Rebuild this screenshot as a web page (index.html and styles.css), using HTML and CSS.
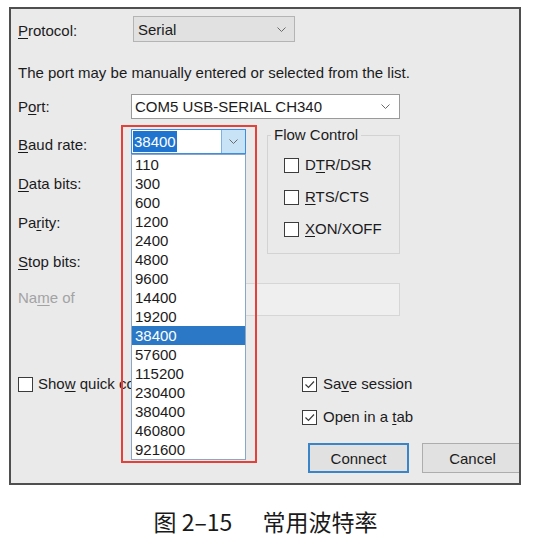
FILE: index.html
```
<!DOCTYPE html>
<html lang="en">
<head>
<meta charset="utf-8">
<title>Serial settings</title>
<link rel="stylesheet" href="styles.css">
</head>
<body>
<div class="dialog">
  <div class="row row-protocol">
    <span class="lbl"><u>P</u>rotocol:</span>
    <div class="combo combo-serial"><span>Serial</span><svg class="chev" width="9" height="5" viewBox="0 0 9 5"><polyline points="0.5,0.5 4.5,4.5 8.5,0.5"/></svg></div>
  </div>
  <p class="hint">The port may be manually entered or selected from the list.</p>
  <div class="row row-port">
    <span class="lbl">P<u>o</u>rt:</span>
    <div class="combo combo-port"><span>COM5 USB-SERIAL CH340</span><svg class="chev" width="9" height="5" viewBox="0 0 9 5"><polyline points="0.5,0.5 4.5,4.5 8.5,0.5"/></svg></div>
  </div>
  <div class="settings">
    <span class="lbl r1"><u>B</u>aud rate:</span>
    <div class="baud">
      <div class="baud-combo">
        <span class="baud-value"><span class="sel">38400</span></span>
        <span class="baud-btn"><svg class="chev" width="9" height="5" viewBox="0 0 9 5"><polyline points="0.5,0.5 4.5,4.5 8.5,0.5"/></svg></span>
      </div>
      <ul class="baud-list">
        <li>110</li><li>300</li><li>600</li><li>1200</li><li>2400</li><li>4800</li><li>9600</li><li>14400</li><li>19200</li><li class="active">38400</li><li>57600</li><li>115200</li><li>230400</li><li>380400</li><li>460800</li><li>921600</li>
      </ul>
      <div class="mark"></div>
    </div>
    <fieldset class="flow">
      <legend>Flow Control</legend>
      <div class="check"><span class="box"></span><span>D<u>T</u>R/DSR</span></div>
      <div class="check"><span class="box"></span><span><u>R</u>TS/CTS</span></div>
      <div class="check"><span class="box"></span><span><u>X</u>ON/XOFF</span></div>
    </fieldset>
    <span class="lbl r2"><u>D</u>ata bits:</span>
    <span class="lbl r3">Pa<u>r</u>ity:</span>
    <span class="lbl r4"><u>S</u>top bits:</span>
  </div>
  <div class="row row-name">
    <span class="lbl muted">Na<u>m</u>e of</span>
    <div class="name-box"></div>
  </div>
  <div class="row row-opts">
    <div class="check show"><span class="box"></span><span>Sho<u>w</u> quick connect on startup</span></div>
    <div class="check"><span class="box"><svg width="13" height="13" viewBox="0 0 13 13"><polyline points="2.5,6.5 5.5,9.5 11,3.5"/></svg></span><span>Sa<u>v</u>e session</span></div>
  </div>
  <div class="row row-tab">
    <div class="check"><span class="box"><svg width="13" height="13" viewBox="0 0 13 13"><polyline points="2.5,6.5 5.5,9.5 11,3.5"/></svg></span><span>Open in a <u>t</u>ab</span></div>
  </div>
  <div class="row row-buttons">
    <button class="btn primary" type="button">Connect</button>
    <button class="btn" type="button">Cancel</button>
  </div>
</div>
<p class="caption"><span>图 2–15</span><span class="cap-title">常用波特率</span></p>
</body>
</html>
```
FILE: styles.css
```
html, body {
  margin: 0;
  padding: 0;
  background: #ffffff;
}

body {
  font-family: "Liberation Sans", Arial, sans-serif;
  font-size: 15px;
  color: #1b1b1b;
}

.dialog {
  box-sizing: border-box;
  width: 512px;
  height: 478px;
  margin: 7px 0 0 9px;
  border: 2px solid #4f4f4f;
  background: #eaeaeb;
  padding-left: 7px;
  overflow: hidden;
}

u {
  text-decoration: underline;
  text-underline-offset: 2px;
  text-decoration-thickness: 1px;
}

.row {
  display: flex;
  align-items: center;
}

.lbl {
  line-height: 18px;
}

.row-protocol {
  margin-top: 7px;
  height: 26px;
}

.row-protocol .lbl {
  margin-top: 4px;
}

.row-protocol .lbl,
.row-port .lbl,
.row-name .lbl {
  width: 113px;
  flex: none;
}

.combo {
  box-sizing: border-box;
  display: flex;
  align-items: center;
  justify-content: space-between;
  padding: 0 8px 0 4px;
}

.chev {
  fill: none;
  stroke: #6a6a6a;
  stroke-width: 1;
}

.combo-serial {
  margin-left: 2px;
  width: 162px;
  height: 26px;
  background: #e1e1e1;
  border: 1px solid #b4b4b4;
}

.hint {
  margin: 22px 0 0;
  line-height: 18px;
}

.row-port {
  margin-top: 12px;
  height: 25px;
}

.combo-port {
  width: 269px;
  height: 25px;
  background: #ffffff;
  border: 1px solid #9a9a9a;
  padding-left: 3px;
  padding-right: 9px;
}

.settings {
  margin-top: 6px;
  display: grid;
  grid-template-columns: 113px 136px 133px;
  grid-template-rows: repeat(4, 39px);
}

.settings .lbl {
  grid-column: 1;
  align-self: center;
}

.r1 { grid-row: 1; }
.r2 { grid-row: 2; }
.r3 { grid-row: 3; }
.r4 { grid-row: 4; }

.baud {
  grid-column: 2;
  grid-row: 1;
  position: relative;
  align-self: start;
  margin-top: 4px;
  width: 115px;
  z-index: 5;
}

.baud-combo {
  box-sizing: border-box;
  display: flex;
  width: 115px;
  height: 25px;
  border: 1px solid #3d8ee0;
  background: #ffffff;
}

.baud-value {
  flex: 1;
  display: flex;
  align-items: center;
  padding-left: 1px;
}

.sel {
  background: #1f74cf;
  color: #ffffff;
  line-height: 21px;
  padding: 0 1px;
}

.baud-btn {
  box-sizing: border-box;
  width: 24px;
  display: flex;
  align-items: center;
  justify-content: center;
  background: #c9e3f6;
  border-left: 1px solid #7fb2e0;
}

.baud-list {
  position: absolute;
  left: 0;
  top: 25px;
  box-sizing: border-box;
  width: 115px;
  margin: 0;
  padding: 0;
  list-style: none;
  background: #ffffff;
  border: 1px solid #8aa7c8;
}

.baud-list li {
  height: 19px;
  line-height: 19px;
  padding-left: 3px;
  color: #1b1b1b;
}

.baud-list li.active {
  background: #2b78c6;
  color: #ffffff;
}

.mark {
  position: absolute;
  left: -10px;
  top: -4px;
  width: 136px;
  height: 338px;
  box-sizing: border-box;
  border: 2px solid #e5403a;
  pointer-events: none;
}

.flow {
  grid-column: 3;
  grid-row: 1 / 5;
  align-self: start;
  box-sizing: border-box;
  margin: 1px 0 0;
  padding: 0;
  height: 128px;
  border: 1px solid #d3d3d3;
  min-width: 0;
}

.flow legend {
  padding: 0 3px;
  margin-left: 3px;
  line-height: 18px;
}

.flow .check {
  height: 20px;
  margin: 12px 0 0 16px;
}

.flow .check:first-of-type {
  margin-top: 11px;
}

.check {
  display: flex;
  align-items: center;
  gap: 6px;
  line-height: 18px;
}

.box {
  box-sizing: border-box;
  width: 15px;
  height: 15px;
  flex: none;
  border: 1px solid #3c3c3c;
  background: #ffffff;
  display: flex;
  align-items: center;
  justify-content: center;
}

.box svg {
  fill: none;
  stroke: #3a3a3a;
  stroke-width: 1.2;
}

.row-name {
  margin-top: 2px;
  height: 33px;
}

.row-name .lbl {
  margin-bottom: 3px;
}

.muted {
  color: #a3a3a3;
}

.name-box {
  box-sizing: border-box;
  width: 269px;
  height: 33px;
  background: #efefef;
  border: 1px solid #d6d6d6;
}

.row-opts {
  margin-top: 60px;
  height: 16px;
}

.row-opts .show {
  width: 284px;
  flex: none;
  gap: 5px;
}

.row-tab {
  margin-top: 17px;
  height: 16px;
  padding-left: 284px;
}

.row-buttons {
  margin-top: 18px;
  padding-left: 290px;
  gap: 13px;
}

.btn {
  box-sizing: border-box;
  width: 101px;
  height: 30px;
  flex: none;
  font-family: "Liberation Sans", Arial, sans-serif;
  font-size: 15px;
  color: #1b1b1b;
  background: #e1e1e1;
  border: 1px solid #adadad;
  padding: 0;
}

.btn.primary {
  border: 2px solid #3a84c9;
}

.caption {
  margin: 21px 0 0;
  padding-right: 4px;
  text-align: center;
  font-family: "Noto Sans CJK SC", "Noto Sans", sans-serif;
  font-size: 23px;
  line-height: 30px;
  color: #1a1a1a;
}

.cap-title {
  margin-left: 30px;
}
```
